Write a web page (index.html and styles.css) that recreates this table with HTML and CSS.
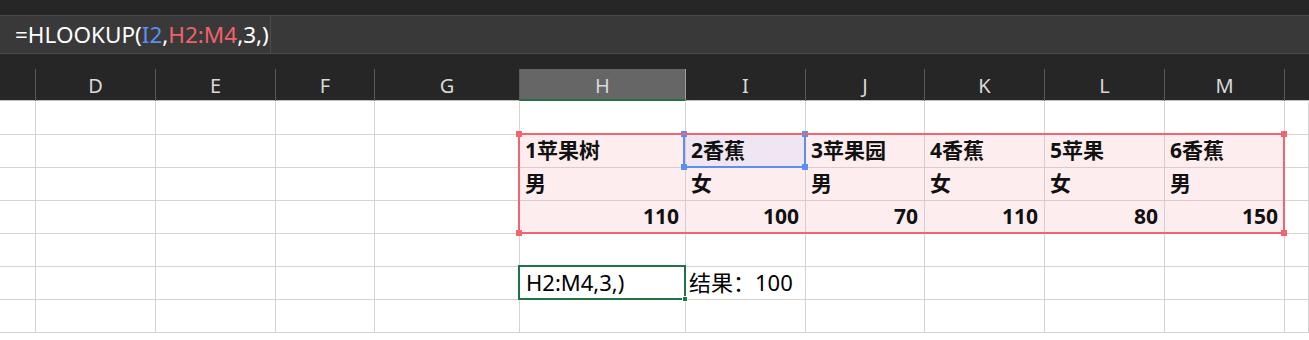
FILE: index.html
```html
<!DOCTYPE html>
<html lang="zh-CN">
<head>
<meta charset="utf-8">
<title>HLOOKUP</title>
<link rel="stylesheet" href="styles.css">
</head>
<body>
<div class="app">
  <div class="topstrip"></div>
  <div class="fbar">
    <div class="ftext">=HLOOKUP(<span class="ref-b">I2</span>,<span class="ref-r">H2:M4</span>,3,)</div>
  </div>
  <div class="gap"></div>
  <div class="colhead">
    <div class="hc"></div>
    <div class="hc">D</div>
    <div class="hc">E</div>
    <div class="hc">F</div>
    <div class="hc">G</div>
    <div class="hc hc-sel">H</div>
    <div class="hc">I</div>
    <div class="hc">J</div>
    <div class="hc">K</div>
    <div class="hc">L</div>
    <div class="hc">M</div>
    <div class="hc hc-last"></div>
  </div>
  <div class="sheet">
    <!-- row 1 -->
    <div class="c"></div><div class="c"></div><div class="c"></div><div class="c"></div><div class="c"></div>
    <div class="c"></div><div class="c"></div><div class="c"></div><div class="c"></div><div class="c"></div><div class="c"></div><div class="c"></div>
    <!-- row 2 -->
    <div class="c"></div><div class="c"></div><div class="c"></div><div class="c"></div><div class="c"></div>
    <div class="c p b">1苹果树</div><div class="c lav b">2香蕉</div><div class="c p b">3苹果园</div><div class="c p b">4香蕉</div><div class="c p b">5苹果</div><div class="c p b">6香蕉</div><div class="c"></div>
    <!-- row 3 -->
    <div class="c"></div><div class="c"></div><div class="c"></div><div class="c"></div><div class="c"></div>
    <div class="c p b">男</div><div class="c p b">女</div><div class="c p b">男</div><div class="c p b">女</div><div class="c p b">女</div><div class="c p b">男</div><div class="c"></div>
    <!-- row 4 -->
    <div class="c"></div><div class="c"></div><div class="c"></div><div class="c"></div><div class="c"></div>
    <div class="c p b num">110</div><div class="c p b num">100</div><div class="c p b num">70</div><div class="c p b num">110</div><div class="c p b num">80</div><div class="c p b num">150</div><div class="c"></div>
    <!-- row 5 -->
    <div class="c"></div><div class="c"></div><div class="c"></div><div class="c"></div><div class="c"></div>
    <div class="c"></div><div class="c"></div><div class="c"></div><div class="c"></div><div class="c"></div><div class="c"></div><div class="c"></div>
    <!-- row 6 -->
    <div class="c"></div><div class="c"></div><div class="c"></div><div class="c"></div><div class="c"></div>
    <div class="c txt">H2:M4,3,)</div><div class="c txt ovf">结果：100</div><div class="c"></div><div class="c"></div><div class="c"></div><div class="c"></div><div class="c"></div>
    <!-- row 7 -->
    <div class="c"></div><div class="c"></div><div class="c"></div><div class="c"></div><div class="c"></div>
    <div class="c"></div><div class="c"></div><div class="c"></div><div class="c"></div><div class="c"></div><div class="c"></div><div class="c"></div>

    <div class="sel-blue">
      <span class="h h-tl blue"></span><span class="h h-tr blue"></span><span class="h h-bl blue"></span><span class="h h-br blue"></span>
    </div>
    <div class="sel-red">
      <span class="h h-tl red"></span><span class="h h-tr red"></span><span class="h h-bl red"></span><span class="h h-br red"></span>
    </div>
    <div class="sel-green">
      <span class="h h-br green"></span>
    </div>
  </div>
</div>
</body>
</html>
```

FILE: styles.css
```css
* { box-sizing: border-box; }
html, body { margin: 0; padding: 0; }
body {
  width: 1309px;
  height: 340px;
  overflow: hidden;
  background: #ffffff;
  font-family: "Noto Sans", "Noto Sans CJK SC", sans-serif;
}
.app { display: flex; flex-direction: column; }
.topstrip { height: 15px; background: #262626; }
.fbar {
  height: 39px;
  background: #393939;
  border-top: 1px solid #4a4a4a;
  border-bottom: 1px solid #4a4a4a;
  display: flex;
  align-items: center;
  padding-left: 15px;
}
.ftext {
  color: #ffffff;
  font-size: 22.5px;
  letter-spacing: 0;
  line-height: 37px;
  padding-right: 1px;
  border-right: 1px solid #4c4c4c;
  height: 37px;
}
.ref-b { color: #5b8ff0; }
.ref-r { color: #f1616b; }
.gap { height: 15px; background: #262626; }
.colhead {
  height: 32px;
  background: #262626;
  border-bottom: 1px solid #bfbfbf;
  display: grid;
  grid-template-columns: 36px 120px 120px 99px 145px 166px 120px 119px 120px 120px 120px 1fr;
}
.hc {
  border-right: 1px solid #5a5a5a;
  color: #d9d9d9;
  font-size: 20px;
  display: flex;
  align-items: center;
  justify-content: center;
  padding-top: 1px;
}
.hc-last { border-right: none; }
.hc-sel {
  background: #666666;
  border-right-color: #a0a0a0;
  border-bottom: 2px solid #217346;
  padding-top: 3px;
}
.sheet {
  position: relative;
  padding-top: 1px;
  display: grid;
  grid-template-columns: 36px 120px 120px 99px 145px 166px 120px 119px 120px 120px 120px 1fr;
  grid-auto-rows: 33px;
}
.c {
  border-right: 1px solid #d4d4d4;
  border-bottom: 1px solid #d4d4d4;
  display: flex;
  align-items: flex-end;
  padding: 0 5px 4px 5px;
  white-space: nowrap;
  color: #111111;
  font-size: 21px;
  line-height: 26px;
}
.p { background: #fdedee; border-color: #dccacc; }
.lav { background: #efe6f1; border-color: #dccacc; }
.b { font-weight: 700; }
.num { justify-content: flex-end; padding-right: 6px; }
.txt { font-weight: 400; color: #000000; padding-left: 6px; font-size: 22px; padding-bottom: 4px; }
.ovf { padding-left: 3px; overflow: visible; }

.sel-red {
  position: absolute;
  left: 518px;
  top: 32px;
  width: 767px;
  height: 101px;
  border: 2px solid #f26570;
}
.sel-blue {
  position: absolute;
  left: 683px;
  top: 32px;
  width: 123px;
  height: 35px;
  border: 2px solid #5b8ff0;
}
.sel-green {
  position: absolute;
  left: 518px;
  top: 164px;
  width: 168px;
  height: 35px;
  border: 2px solid #217346;
}
.h {
  position: absolute;
  width: 6px;
  height: 6px;
}
.h-tl { left: -4px; top: -4px; }
.h-tr { right: -4px; top: -4px; }
.h-bl { left: -4px; bottom: -4px; }
.h-br { right: -4px; bottom: -4px; }
.red { background: #f26570; }
.blue { background: #5b8ff0; }
.green { background: #217346; width: 6px; height: 6px; right: -4px; bottom: -4px; border: 1px solid #ffffff; }
```
